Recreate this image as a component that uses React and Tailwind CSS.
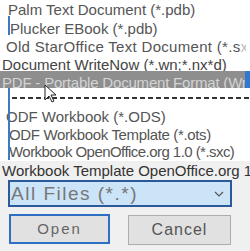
export default function App() {
  return (
    <div className="relative w-[250px] h-[251px] overflow-hidden bg-white font-['Liberation_Sans',Arial,sans-serif] text-[15px] text-[#555]">
      {/* file type list */}
      <div className="flex flex-col whitespace-nowrap">
        <div className="h-[19px] leading-[19px] pl-[8px]">Palm Text Document (*.pdb)</div>
        <div className="h-[18px] leading-[19px] pl-[10px]">Plucker EBook (*.pdb)</div>
        <div className="h-[18px] leading-[19px] pl-[6px] w-[246px] overflow-hidden tracking-[0.3px] bg-clip-text">
          Old StarOffice Text Document (*.s<span className="text-[#bbb]">xw)</span>
        </div>
        <div className="h-[16px] leading-[19px] pl-[2px] text-[#444]">Document WriteNow (*.wn;*.nx*d)</div>
        <div className="relative z-10 h-[17px] leading-[24px] pl-[2px] overflow-hidden bg-[#8e8e8e] text-[#d4d4d4] flex">
          <span className="flex-1 overflow-hidden tracking-[-0.2px]">PDF - Portable Document Format (Writer)</span>
          <span className="w-[5px] bg-[#2f7ad0]"></span>
        </div>
        <div className="h-[19px] pl-[12px] pt-[9px]">
          <div className="h-[2px] bg-[repeating-linear-gradient(90deg,#333_0_5px,transparent_5px_8px)]"></div>
        </div>
        <div className="h-[18px] leading-[19px] pl-[6px]">ODF Workbook (*.ODS)</div>
        <div className="h-[17px] leading-[19px] pl-[9px] tracking-[-0.35px]">ODF Workbook Template (*.ots)</div>
        <div className="h-[19px] leading-[19px] pl-[9px] tracking-[-0.55px]">Workbook OpenOffice.org 1.0 (*.sxc)</div>
      </div>

      {/* lower panel */}
      <div className="bg-[#f0f0f0] h-[90px]">
        <div className="h-[19px] leading-[19px] pl-[2px] text-[#333] whitespace-nowrap">Workbook Template OpenOffice.org 1.5</div>
        <div className="ml-[8px] w-[224px] h-[27px] border-2 border-[#2a5a9a] bg-[#cce4f7] flex items-center justify-between pl-[1px] pr-[6px]">
          <span className="text-[19px] tracking-[1.5px] text-[#777] leading-none">All Files (*.*)</span>
          <svg width="10" height="6" viewBox="0 0 10 6" fill="none" stroke="#555" strokeWidth="1.2">
            <path d="M1 1l4 4 4-4" />
          </svg>
        </div>
        <div className="flex items-start mt-[7px] pl-[9px] gap-[18px]">
          <button className="w-[101px] h-[30px] border-2 border-[#2f6fc2] bg-[#e1e1e1] text-[#666] tracking-[2px] text-[15px]">Open</button>
          <button className="w-[103px] h-[30px] mt-[1px] border border-[#adadad] bg-[#e1e1e1] text-[#555] tracking-[1px] text-[16px]">Cancel</button>
        </div>
      </div>

      {/* caret lines */}
      <div className="absolute left-[8px] top-[16px] w-[2px] h-[19px] bg-[#3c7bc4]"></div>
      <div className="absolute left-[8px] top-[87px] w-[2px] h-[73px] bg-[#3c7bc4]"></div>

      {/* mouse cursor */}
      <svg className="absolute left-[44px] top-[84px] z-20" width="14" height="20" viewBox="0 0 14 20">
        <path d="M1 1v15l4-4 3 6 2-1-3-6h5z" fill="#fff" stroke="#222" strokeWidth="1" strokeLinejoin="round" />
      </svg>
    </div>
  );
}
